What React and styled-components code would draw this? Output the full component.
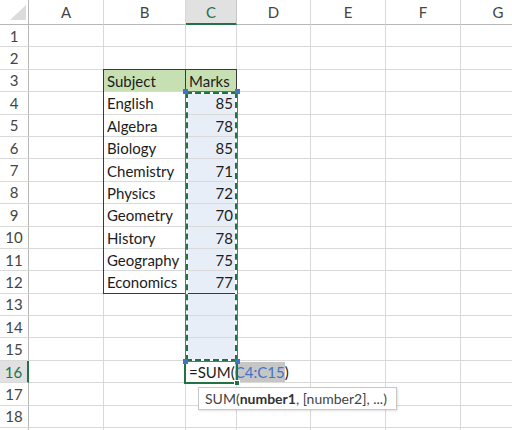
import React from 'react';
import styled, { createGlobalStyle, css } from 'styled-components';

const GlobalStyle = createGlobalStyle`
  html, body { margin: 0; padding: 0; background: #ffffff; overflow: hidden; }
  * { box-sizing: border-box; }
`;

const GRID = '#d9d9d9';
const HEAD_LINE = '#b7b7b7';
const GREEN = '#217346';
const BLUE = '#4472c4';

const COLS = ['A', 'B', 'C', 'D', 'E', 'F', 'G'];
const ROW_COUNT = 19;
const NUMBERED_ROWS = 18;

const DATA = {
  3: { B: 'Subject', C: 'Marks' },
  4: { B: 'English', C: '85' },
  5: { B: 'Algebra', C: '78' },
  6: { B: 'Biology', C: '85' },
  7: { B: 'Chemistry', C: '71' },
  8: { B: 'Physics', C: '72' },
  9: { B: 'Geometry', C: '70' },
  10: { B: 'History', C: '78' },
  11: { B: 'Geography', C: '75' },
  12: { B: 'Economics', C: '77' },
};

const Sheet = styled.div`
  display: grid;
  grid-template-columns: 29px 75px 82px 51px 74px 75px 75px 75px;
  grid-template-rows: 25px repeat(${ROW_COUNT}, 22.4px);
  width: 512px;
  height: 430px;
  overflow: hidden;
  font-family: Lato, "Open Sans", sans-serif;
  font-size: 15px;
  color: #1c1c1c;
`;

const placed = css`
  grid-row: ${(p) => p.$row};
  grid-column: ${(p) => p.$col};
`;

const Corner = styled.div`
  grid-row: 1;
  grid-column: 1;
  display: flex;
  align-items: flex-end;
  justify-content: flex-end;
  padding: 0 2px 4px 0;
  border-right: 1px solid ${HEAD_LINE};
  border-bottom: 1px solid ${HEAD_LINE};
`;

const ColHeader = styled.div`
  ${placed}
  display: flex;
  align-items: center;
  justify-content: center;
  color: #444;
  border-right: 1px solid ${GRID};
  border-bottom: 1px solid ${HEAD_LINE};
  ${(p) =>
    p.$active &&
    css`
      background: #e1e1e1;
      color: ${GREEN};
      border-right-color: #c6c6c6;
      border-bottom: 2px solid ${GREEN};
    `}
`;

const RowHeader = styled.div`
  ${placed}
  display: flex;
  align-items: center;
  justify-content: center;
  color: #444;
  border-right: 1px solid ${HEAD_LINE};
  border-bottom: 1px solid ${GRID};
  ${(p) =>
    p.$active &&
    css`
      background: #e1e1e1;
      color: ${GREEN};
      border-right: 2px solid ${GREEN};
    `}
`;

const Cell = styled.div`
  ${placed}
  display: flex;
  align-items: center;
  justify-content: ${(p) => (p.$right ? 'flex-end' : 'flex-start')};
  padding: 1px 3px 0 3px;
  white-space: nowrap;
  border-right: 1px solid ${(p) => (p.$darkRight ? '#3a3a3a' : GRID)};
  border-bottom: 1px solid ${GRID};
  background: ${(p) => p.$fill || 'transparent'};
  min-width: 0;
`;

const TableFrame = styled.div`
  grid-column: 3 / 5;
  grid-row: 4 / 14;
  margin: -1px 0 0 -1px;
  border: 1px solid #3a3a3a;
  pointer-events: none;
`;

const ActiveBox = styled.div`
  grid-column: 4;
  grid-row: 17;
  margin: -1px -1px -1px -2px;
  border: 2px solid ${GREEN};
  position: relative;
  pointer-events: none;
`;

const FillHandle = styled.span`
  position: absolute;
  right: -4px;
  bottom: -4px;
  width: 6px;
  height: 6px;
  background: ${GREEN};
  border: 1px solid #fff;
`;

const Tooltip = styled.div`
  position: absolute;
  left: 12px;
  top: 25px;
  display: flex;
  align-items: center;
  height: 23px;
  padding: 0 9px 0 6px;
  background: #fff;
  border: 1px solid #c8c8c8;
  box-shadow: 1px 1px 2px rgba(0, 0, 0, 0.12);
  white-space: nowrap;
  font-family: Lato, "Open Sans", sans-serif;
  font-size: 14px;
  color: #444;
  & b { font-weight: 700; color: #333; }
`;

const Marquee = styled.div`
  grid-column: 4;
  grid-row: 5 / 17;
  margin: -1px -1px -1px -1px;
  border: 1px solid ${BLUE};
  position: relative;
  pointer-events: none;
`;

const MarqueeWhite = styled.div`
  height: 100%;
  border: 2px solid #fff;
`;

const MarqueeDash = styled.div`
  margin: -2px;
  height: calc(100% + 4px);
  border: 2px dashed ${GREEN};
`;

const Handle = styled.span`
  position: absolute;
  width: 5px;
  height: 5px;
  background: ${BLUE};
  ${(p) => (p.$top ? 'top: -3px;' : 'bottom: -3px;')}
  ${(p) => (p.$left ? 'left: -3px;' : 'right: -3px;')}
`;

const RefText = styled.span`
  display: inline-block;
  line-height: 20px;
  background: #c6c6c6;
  color: ${BLUE};
`;

const CornerTriangle = () => (
  <svg width="16" height="15" viewBox="0 0 16 15">
    <polygon points="16,0 16,15 0,15" fill="#dcdcdc" />
  </svg>
);

export default function App() {
  const cells = [];
  cells.push(<Corner key="corner"><CornerTriangle /></Corner>);
  COLS.forEach((c, i) =>
    cells.push(
      <ColHeader key={`h${c}`} $row={1} $col={i + 2} $active={c === 'C'}>
        {c}
      </ColHeader>
    )
  );

  for (let r = 1; r <= ROW_COUNT; r++) {
    cells.push(
      <RowHeader key={`r${r}`} $row={r + 1} $col={1} $active={r === 16}>
        {r <= NUMBERED_ROWS ? r : null}
      </RowHeader>
    );
    COLS.forEach((c, i) => {
      const key = `${c}${r}`;
      const value = DATA[r] ? DATA[r][c] : undefined;
      let fill;
      if (r === 3 && (c === 'B' || c === 'C')) fill = '#c6e0b4';
      else if (c === 'C' && r >= 4 && r <= 15) fill = '#e8eef8';
      if (c === 'C' && r === 16) {
        cells.push(
          <Cell key={key} $row={r + 1} $col={i + 2}>
            =SUM(<RefText>C4:C15</RefText>)
          </Cell>
        );
        return;
      }
      cells.push(
        <Cell
          key={key}
          $row={r + 1}
          $col={i + 2}
          $fill={fill}
          $right={c === 'C' && r >= 4}
          $darkRight={c === 'B' && r === 3}
        >
          {value}
        </Cell>
      );
    });
  }

  return (
    <>
      <GlobalStyle />
      <Sheet>
        {cells}
        <TableFrame />
        <ActiveBox>
          <FillHandle />
          <Tooltip>
            SUM(<b>number1</b>, [number2], ...)
          </Tooltip>
        </ActiveBox>
        <Marquee>
          <MarqueeWhite>
            <MarqueeDash />
          </MarqueeWhite>
          <Handle $top $left />
          <Handle $top />
          <Handle $left />
          <Handle />
        </Marquee>
      </Sheet>
    </>
  );
}
